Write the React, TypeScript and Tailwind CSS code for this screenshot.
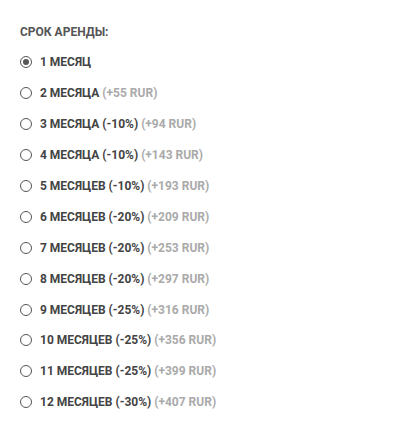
const options = [
  { label: '1 МЕСЯЦ', extra: '' },
  { label: '2 МЕСЯЦА', extra: '(+55 RUR)' },
  { label: '3 МЕСЯЦА (-10%)', extra: '(+94 RUR)' },
  { label: '4 МЕСЯЦА (-10%)', extra: '(+143 RUR)' },
  { label: '5 МЕСЯЦЕВ (-10%)', extra: '(+193 RUR)' },
  { label: '6 МЕСЯЦЕВ (-20%)', extra: '(+209 RUR)' },
  { label: '7 МЕСЯЦЕВ (-20%)', extra: '(+253 RUR)' },
  { label: '8 МЕСЯЦЕВ (-20%)', extra: '(+297 RUR)' },
  { label: '9 МЕСЯЦЕВ (-25%)', extra: '(+316 RUR)' },
  { label: '10 МЕСЯЦЕВ (-25%)', extra: '(+356 RUR)' },
  { label: '11 МЕСЯЦЕВ (-25%)', extra: '(+399 RUR)' },
  { label: '12 МЕСЯЦЕВ (-30%)', extra: '(+407 RUR)' },
];

const App = () => {
  const selected = 0;
  return (
    <div className="w-[408px] h-[427px] bg-white px-5 pt-[25px] font-['Roboto',sans-serif]">
      <p className="text-[12px] font-bold text-[#555] leading-[14px] mb-[8px]">СРОК АРЕНДЫ:</p>
      <div className="flex flex-col">
        {options.map((o, i) => (
          <label key={o.label} className="flex items-center h-[30.9px] gap-2">
            <span className="w-3 h-3 rounded-full border border-[#555] flex items-center justify-center">
              {i === selected && <span className="w-[6px] h-[6px] rounded-full bg-[#555]" />}
            </span>
            <span className="text-[12px] font-bold text-[#444]">
              {o.label}
              {o.extra && <span className="text-[#aaa]"> {o.extra}</span>}
            </span>
          </label>
        ))}
      </div>
    </div>
  );
};

export default App;
